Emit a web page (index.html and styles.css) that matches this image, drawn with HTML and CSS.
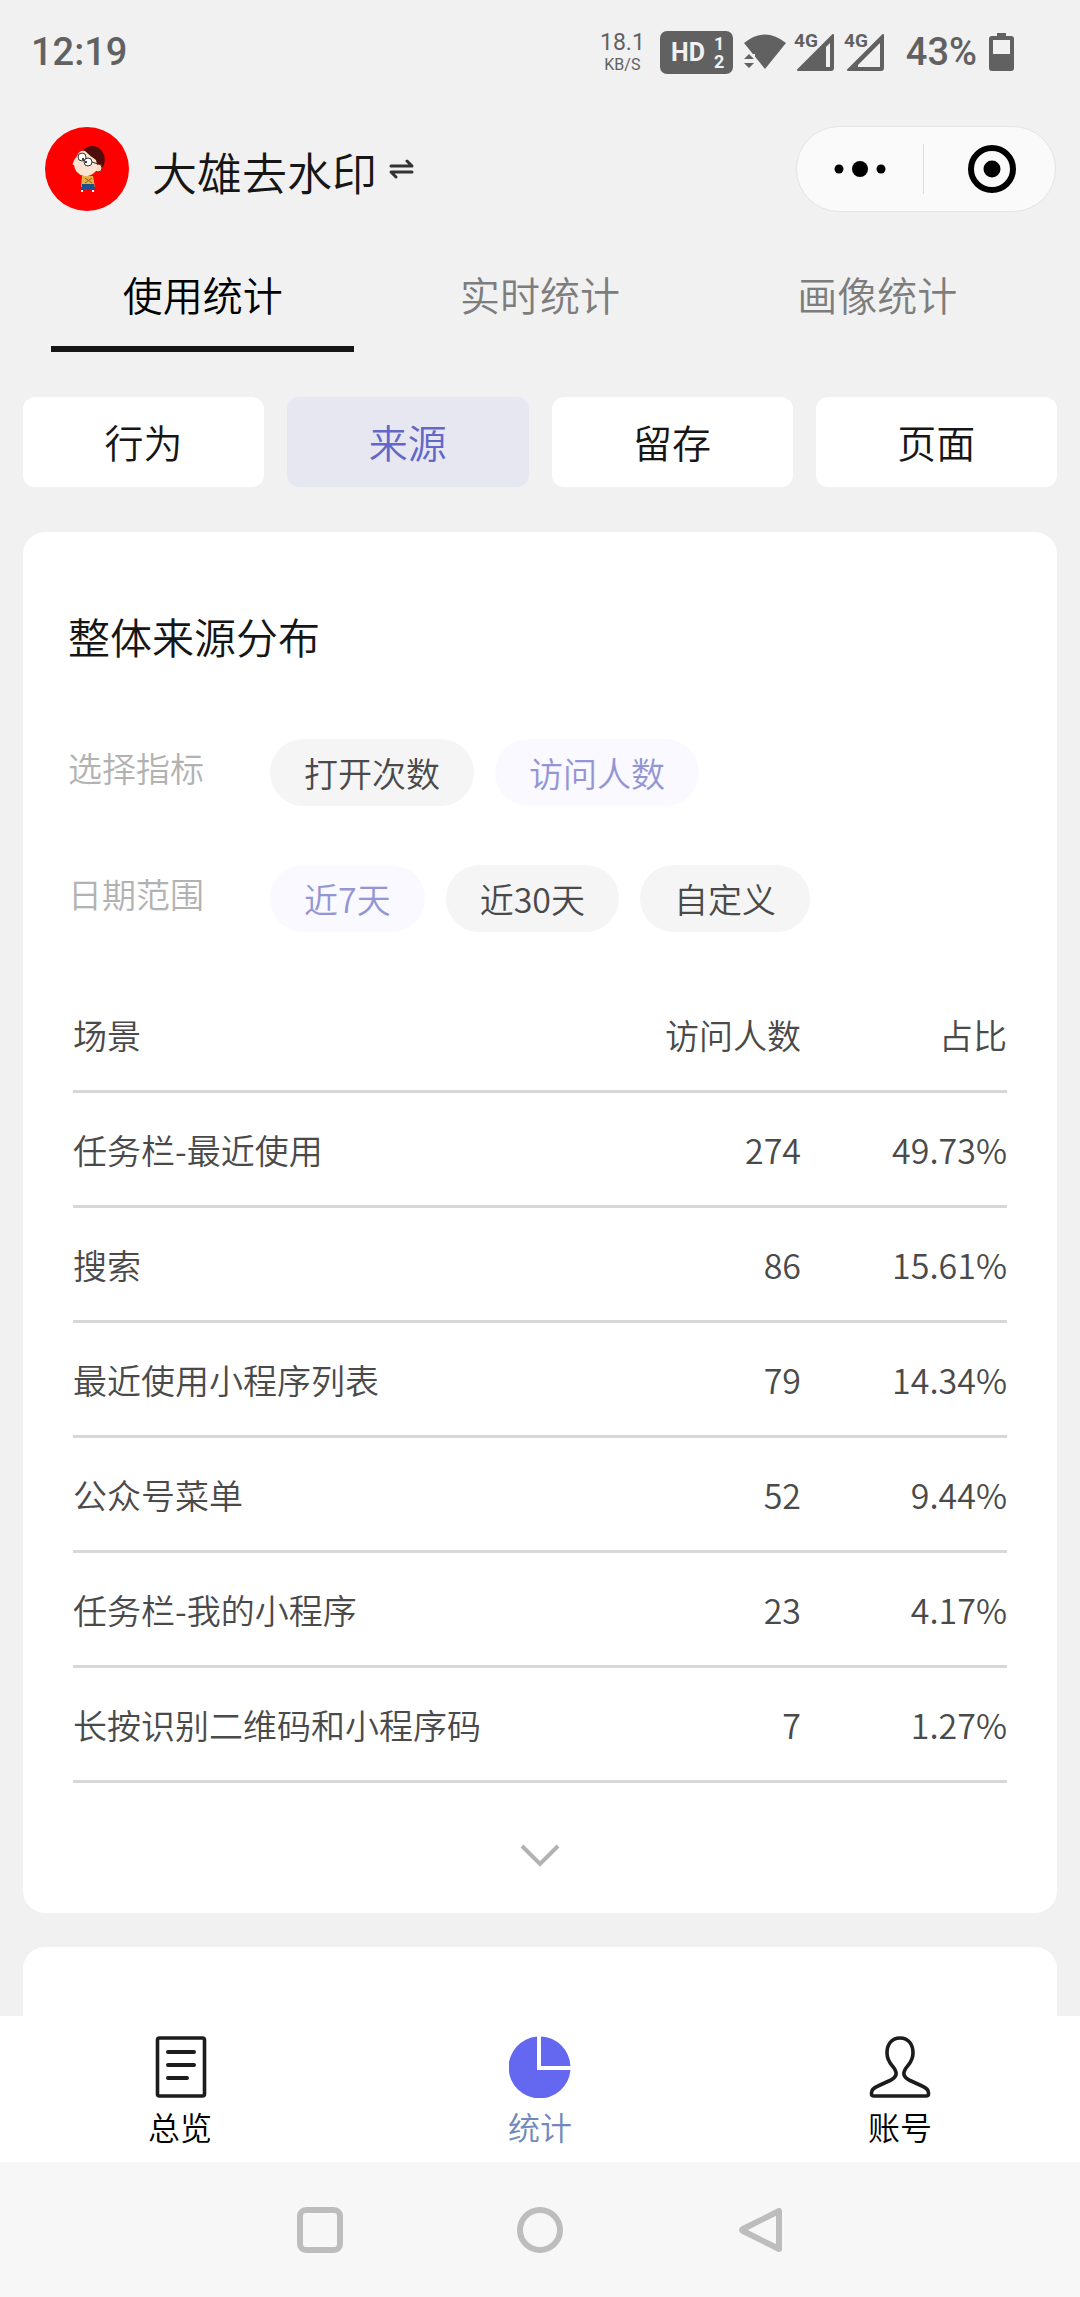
FILE: index.html
```html
<!DOCTYPE html>
<html lang="zh-CN">
<head>
  <meta charset="UTF-8">
  <meta name="viewport" content="width=device-width, initial-scale=1.0">
  <title>大雄去水印 - 使用统计</title>
  <link rel="stylesheet" href="styles.css">
</head>
<body>
  <!-- 状态栏 -->
  <div class="status-bar">
    <span class="clock">12:19</span>
    <div class="net-speed"><span>18.1</span><span class="unit">KB/S</span></div>
    <svg class="hd" width="73" height="43" viewBox="0 0 73 43">
      <rect width="73" height="43" rx="7" fill="#616161"/>
      <text x="11" y="30" font-size="25" font-weight="700">HD</text>
      <text x="54" y="19" font-size="18" font-weight="700">1</text>
      <text x="54" y="37" font-size="18" font-weight="700">2</text>
    </svg>
    <svg class="wifi" width="42" height="36" viewBox="0 0 42 36" fill="#616161">
      <path d="M0 9Q21 -8 42 9L21 35Z"/>
      <path d="M-1 20H11V32H-1Z" fill="#f1f1f1"/>
      <path d="M0 25L5 20L10 25ZM0 29H10L5 34Z"/>
    </svg>
    <svg class="signal" width="42" height="50" viewBox="0 -6 42 50">
      <path d="M4 37L39 2V35Q39 37 37 37Z" fill="#616161" stroke="#616161" stroke-width="2" stroke-linejoin="round"/>
      <path d="M32 14L36 10V34H32Z" fill="#f1f1f1"/>
      <text class="g" x="0" y="14" font-size="19" font-weight="700">4G</text>
    </svg>
    <svg class="signal" width="42" height="50" viewBox="0 -6 42 50">
      <path d="M4 37L39 2V35Q39 37 37 37Z" fill="#616161" stroke="#616161" stroke-width="2" stroke-linejoin="round"/>
      <path d="M14 32L36 10V34H14Z" fill="#f1f1f1"/>
      <path d="M10 38V31L14 27V38Z" fill="#616161"/>
      <text class="g" x="0" y="14" font-size="19" font-weight="700">4G</text>
    </svg>
    <span class="battery-text">43%</span>
    <svg width="25" height="38" viewBox="0 0 25 38" fill="#616161">
      <path d="M8 0H17V3H22Q25 3 25 6V35Q25 38 22 38H3Q0 38 0 35V6Q0 3 3 3H8Z"/>
      <rect x="4" y="7" width="17" height="14" fill="#f1f1f1"/>
    </svg>
  </div>

  <!-- 小程序标题 -->
  <header class="title-bar">
    <svg class="avatar" width="84" height="84" viewBox="0 0 84 84">
      <circle cx="42" cy="42" r="42" fill="#fe0000"/>
      <path d="M37 49H48L50 60H36Z" fill="#e8ae45"/>
      <path d="M40 51L47 56M47 51L40 56" stroke="#8a5a20" stroke-width="1"/>
      <path d="M37 57H49L50 63H37Z" fill="#1c4f8c"/>
      <path d="M37 63V65M48 63V65" stroke="#fff" stroke-width="2"/>
      <path d="M38 23Q46 16 54 21Q62 28 59 38L55 44L47 34Q43 30 38 29Z" fill="#4e0d08"/>
      <circle cx="53" cy="41" r="4" fill="#fbd9c4" stroke="#7a2a1a" stroke-width="1"/>
      <path d="M28 36Q29 32 32 29Q34 23 40 24Q46 30 51 33Q53 40 51 44Q46 50 39 49Q30 47 29 38Q27 38 28 36Z" fill="#fde3d2"/>
      <circle cx="37" cy="30" r="4" fill="#fff" stroke="#333" stroke-width="1"/>
      <circle cx="43" cy="35" r="4" fill="#fff" stroke="#333" stroke-width="1"/>
      <path d="M47 35L53 37" stroke="#333" stroke-width="1"/>
      <circle cx="38" cy="32" r="1" fill="#000"/>
      <circle cx="41" cy="35" r="1" fill="#000"/>
    </svg>
    <h1 class="app-name">大雄去水印</h1>
    <svg class="switch" width="25" height="20" viewBox="0 0 25 20" fill="none" stroke="#333" stroke-width="3" stroke-linecap="round" stroke-linejoin="round">
      <path d="M2 7H23L18 2"/>
      <path d="M23 13H2L7 18"/>
    </svg>
    <div class="capsule">
      <button type="button" class="capsule-btn" aria-label="更多">
        <svg width="52" height="18" viewBox="0 0 52 18"><circle cx="5" cy="9" r="4.5"/><circle cx="26" cy="9" r="8"/><circle cx="47" cy="9" r="4.5"/></svg>
      </button>
      <button type="button" class="capsule-btn" aria-label="关闭">
        <svg width="48" height="48" viewBox="0 0 48 48"><circle cx="24" cy="24" r="21" fill="none" stroke="#000" stroke-width="6"/><circle cx="24" cy="24" r="8.5"/></svg>
      </button>
    </div>
  </header>

  <main class="content">
    <nav class="tabs">
      <a href="#usage" class="tab active">使用统计</a>
      <a href="#realtime" class="tab">实时统计</a>
      <a href="#portrait" class="tab">画像统计</a>
    </nav>

    <div class="segments">
      <button type="button" class="segment">行为</button>
      <button type="button" class="segment active">来源</button>
      <button type="button" class="segment">留存</button>
      <button type="button" class="segment">页面</button>
    </div>

    <section class="card">
      <h2 class="card-title">整体来源分布</h2>
      <div class="filter">
        <span class="filter-label">选择指标</span>
        <button type="button" class="pill">打开次数</button>
        <button type="button" class="pill active">访问人数</button>
      </div>
      <div class="filter">
        <span class="filter-label">日期范围</span>
        <button type="button" class="pill active">近7天</button>
        <button type="button" class="pill">近30天</button>
        <button type="button" class="pill">自定义</button>
      </div>

      <table class="source-table">
        <thead>
          <tr><th>场景</th><th class="num">访问人数</th><th class="num rate">占比</th></tr>
        </thead>
        <tbody>
          <tr><td>任务栏-最近使用</td><td class="num">274</td><td class="num">49.73%</td></tr>
          <tr><td>搜索</td><td class="num">86</td><td class="num">15.61%</td></tr>
          <tr><td>最近使用小程序列表</td><td class="num">79</td><td class="num">14.34%</td></tr>
          <tr><td>公众号菜单</td><td class="num">52</td><td class="num">9.44%</td></tr>
          <tr><td>任务栏-我的小程序</td><td class="num">23</td><td class="num">4.17%</td></tr>
          <tr><td>长按识别二维码和小程序码</td><td class="num">7</td><td class="num">1.27%</td></tr>
        </tbody>
      </table>

      <button type="button" class="more" aria-label="展开">
        <svg width="40" height="24" viewBox="0 0 40 24" fill="none" stroke="#b2b2b2" stroke-width="4"><path d="M2 2L20 20L38 2"/></svg>
      </button>
    </section>

    <section class="card next-card"></section>
  </main>

  <!-- 底部导航 -->
  <nav class="tab-bar">
    <a href="#overview" class="tab-item">
      <svg width="62" height="62" viewBox="0 0 62 62" fill="none" stroke="#1c1c1c" stroke-linecap="round">
        <rect x="8.5" y="2" width="47" height="58" rx="2" stroke-width="3.6"/>
        <path d="M19 16H45M19 29H45M19 42H38" stroke-width="4"/>
      </svg>
      <span>总览</span>
    </a>
    <a href="#stats" class="tab-item active">
      <svg width="62" height="62" viewBox="0 0 62 62" fill="#6467ef">
        <path d="M28 .5V34H61.500A31 31 0 1 1 28 .5Z"/>
        <path d="M32 .5A31 31 0 0 1 61.500 30H32Z"/>
      </svg>
      <span>统计</span>
    </a>
    <a href="#account" class="tab-item">
      <svg width="62" height="62" viewBox="0 0 62 62" fill="none" stroke="#1c1c1c" stroke-width="3.6" stroke-linejoin="round">
        <path d="M31 2C22 2 18 9 18 17C18 25 22 28 25 32C29 38 27 41 22 44L9 50C4 52 2.500 54 2.500 57V58Q2.500 60 5 60H57Q59.500 60 59.500 58V57C59.500 54 58 52 53 50L40 44C35 41 33 38 37 32C40 28 44 25 44 17C44 9 40 2 31 2Z"/>
      </svg>
      <span>账号</span>
    </a>
  </nav>

  <!-- 系统按键 -->
  <div class="system-nav">
    <button type="button" aria-label="最近任务">
      <svg width="46" height="46" viewBox="0 0 46 46"><rect x="3" y="3" width="40" height="40" rx="6"/></svg>
    </button>
    <button type="button" aria-label="主页">
      <svg width="46" height="46" viewBox="0 0 46 46"><circle cx="23" cy="23" r="20"/></svg>
    </button>
    <button type="button" aria-label="返回">
      <svg width="46" height="46" viewBox="0 0 46 46"><path d="M42 4V42L6 24Q4 23 6 22Z"/></svg>
    </button>
  </div>
</body>
</html>
```
FILE: styles.css
```css
* {
  box-sizing: border-box;
}

body {
  margin: 0;
  height: 100vh;
  display: flex;
  flex-direction: column;
  overflow: hidden;
  background-color: #f1f1f1;
  color: #161616;
  font-family: "Noto Sans CJK SC", sans-serif;
  font-weight: 350;
}

button {
  border: none;
  padding: 0;
  background: none;
  color: inherit;
  font-family: inherit;
  font-weight: inherit;
  cursor: pointer;
}

a {
  color: inherit;
  text-decoration: none;
}

svg {
  display: block;
  flex-shrink: 0;
}

/* 状态栏 */
.status-bar {
  display: flex;
  align-items: center;
  height: 104px;
  padding: 0 66px 0 31px;
  color: #616161;
  font-family: Roboto, sans-serif;
  font-size: 38px;
  font-weight: 500;
}

.status-bar text {
  fill: #f1f1f1;
  font-family: Roboto, sans-serif;
}

.status-bar .g {
  fill: #616161;
  stroke: #f1f1f1;
  stroke-width: 3px;
  paint-order: stroke;
}

.net-speed {
  display: flex;
  flex-direction: column;
  align-items: center;
  margin-left: auto;
  font-size: 23px;
  font-weight: 400;
  line-height: 26px;
}

.net-speed .unit {
  font-size: 16px;
  line-height: 18px;
}

.hd {
  margin-left: 15px;
}

.wifi {
  margin-left: 11px;
}

.signal {
  margin-left: 8px;
}

.battery-text {
  margin: 0 12px 0 20px;
}

/* 标题 */
.title-bar {
  display: flex;
  align-items: center;
  margin-top: 22px;
  padding: 0 24px 0 45px;
}

.app-name {
  margin: 0 12px 0 23px;
  padding-top: 5px;
  font-size: 45px;
  font-weight: inherit;
  line-height: 81px;
}

.capsule {
  display: flex;
  margin-left: auto;
  width: 260px;
  height: 86px;
  padding: 17px 0;
  border: 1px solid #e4e4e4;
  border-radius: 43px;
  background-color: #fafafa;
}

.capsule-btn {
  flex: 1;
  display: flex;
  align-items: center;
  justify-content: center;
}

.capsule-btn + .capsule-btn {
  padding-left: 5px;
  border-left: 1px solid #dcdcdc;
}

/* 内容区 */
.content {
  flex: 1;
  min-height: 0;
  overflow: hidden;
  padding: 0 23px;
}

.tabs {
  display: flex;
  gap: 34px;
  padding: 54px 28px 0;
}

.tab {
  flex: 1;
  padding-bottom: 24px;
  border-bottom: 6px solid transparent;
  color: #7d7d7d;
  font-size: 40px;
  line-height: 56px;
  text-align: center;
}

.tab.active {
  color: #000;
  border-bottom-color: #161616;
}

.segments {
  display: flex;
  gap: 23px;
  margin: 45px 0;
}

.segment {
  flex: 1;
  height: 90px;
  padding-bottom: 2px;
  border-radius: 12px;
  background-color: #fff;
  font-size: 39px;
}

.segment.active {
  background-color: #e6e7f1;
  color: #6467c8;
}

.card {
  padding: 74px 45px 23px;
  border-radius: 22px;
  background-color: #fff;
}

.card-title {
  margin: 0 0 73px;
  font-size: 42px;
  font-weight: inherit;
  line-height: 60px;
}

.filter {
  display: flex;
  gap: 21px;
  margin-bottom: 59px;
  font-size: 34px;
}

.filter-label {
  width: 181px;
  color: #b2b2b2;
  line-height: 58px;
}

.pill {
  height: 67px;
  padding: 0 34px;
  border-radius: 34px;
  background-color: #f5f5f5;
  color: #4a4a4a;
  font-size: 34px;
}

.pill.active {
  background-color: #f9f9ff;
  color: #9496d3;
}

/* 来源表格 */
.source-table {
  width: 100%;
  margin-top: -13px;
  padding: 0 5px;
  border-spacing: 0;
  color: #4a4a4a;
  font-size: 34px;
}

.source-table th,
.source-table td {
  height: 115px;
  padding: 0;
  border-bottom: 3px solid #d8d8d8;
  font-weight: inherit;
  text-align: left;
}

.source-table .num {
  text-align: right;
}

.source-table .rate {
  width: 206px;
}

.more {
  display: flex;
  align-items: center;
  justify-content: center;
  width: 100%;
  height: 107px;
  padding-top: 38px;
}

.next-card {
  margin-top: 34px;
  height: 400px;
}

/* 底部导航 */
.tab-bar {
  display: flex;
  height: 146px;
  background-color: #fff;
}

.tab-item {
  flex: 1;
  display: flex;
  flex-direction: column;
  align-items: center;
  padding-top: 20px;
  color: #000;
  font-size: 32px;
  line-height: 56px;
}

.tab-item.active {
  color: #7189bd;
}

/* 系统按键 */
.system-nav {
  display: flex;
  align-items: center;
  justify-content: center;
  gap: 174px;
  height: 135px;
  background-color: #f7f7f7;
}

.system-nav svg {
  fill: none;
  stroke: #bdbdbd;
  stroke-width: 6px;
  stroke-linejoin: round;
}
```
